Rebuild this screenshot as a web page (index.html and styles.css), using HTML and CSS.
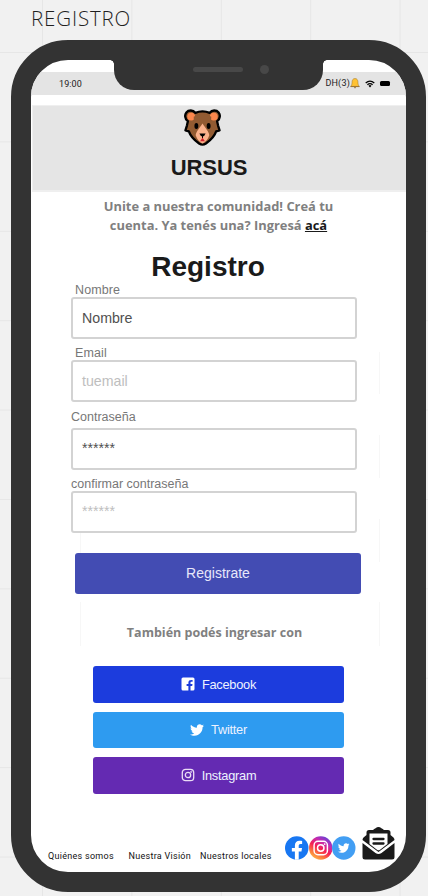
FILE: index.html
```html
<!DOCTYPE html>
<html lang="es">
<head>
<meta charset="utf-8">
<title>Ursus - Registro</title>
<link rel="stylesheet" href="styles.css">
</head>
<body>
<svg width="0" height="0" class="defs">
  <defs>
    <symbol id="bird" viewBox="0 0 512 512"><path fill="currentColor" d="M459 152c.3 4.500.3 9.100.3 13.600 0 138.700-105.600 298.600-298.600 298.600C101.100 464.200 46.100 447 0 417.100c8.400 1 16.600 1.300 25.300 1.300 49.100 0 94.200-16.600 130.300-44.800-46.100-1-84.800-31.200-98.100-72.800 6.500 1 13 1.600 19.800 1.600 9.400 0 18.800-1.300 27.600-3.600-48.100-9.700-84.100-52-84.100-103v-1.300c14 7.800 30.200 12.700 47.400 13.300-28.300-18.800-46.800-51-46.800-87.400 0-19.500 5.200-37.400 14.300-53 51.700 63.700 129.300 105.300 216.400 109.800-1.600-7.800-2.600-15.900-2.600-24 0-57.800 46.800-104.900 104.900-104.900 30.200 0 57.500 12.700 76.700 33.100 23.700-4.500 46.500-13.300 66.600-25.300-7.800 24.400-24.400 44.800-46.100 57.800 21.100-2.300 41.600-8.100 60.400-16.200-14.300 20.800-32.200 39.300-52.600 54.300z"/></symbol>
    <linearGradient id="insta" x1="0.200" y1="1" x2="0.800" y2="0">
      <stop offset="0" stop-color="#ffc24a"/><stop offset=".25" stop-color="#fb743c"/><stop offset=".48" stop-color="#f51f55"/><stop offset=".72" stop-color="#c62bb0"/><stop offset="1" stop-color="#5145dc"/>
    </linearGradient>
  </defs>
</svg>
<h2 class="board-title">REGISTRO</h2>
<main class="phone">
  <div class="notch"><span class="speaker"></span><span class="camera"></span></div>
  <div class="status">
    <span class="time">19:00</span>
    <span class="network">DH(3)</span>
    <svg class="bell" viewBox="0 0 10 11"><path d="M5 .5C2.800.6 2 2.200 2 4.500 2 6.800 1.500 7.500.6 8.400h8.800C8.500 7.500 8 6.800 8 4.500 8 2.200 7.200.6 5 .5z" fill="#ffc233" stroke="#9b742b" stroke-width=".5"/><path d="M.6 8.600h8.800M4 9.300q1 1.500 2 0" fill="none" stroke="#8e6524" stroke-width=".8"/></svg>
    <svg class="wifi" viewBox="0 0 10 8"><path d="M.7 3Q5-.8 9.300 3M2.400 4.700Q5 2.500 7.600 4.700" fill="none" stroke="#000" stroke-width="1.300"/><path d="M3.500 5.700Q5 4.400 6.500 5.700L5 7.500z"/></svg>
    <span class="battery"></span>
  </div>
  <header class="brand">
    <svg class="bear" viewBox="0 0 38 38">
      <path d="M7 1.500C3 1.500.8 4.600 1.300 8c.2 2 1.200 3.500 2.700 4.500L3 17l-1.500 5 3.500 1c1.500 4.500 5 8.500 10.500 12.500q3.500 2.200 7 0C28 31.500 31.500 27.500 33 23l3.500-1L35 17l-1-4.500c1.500-1 2.500-2.500 2.700-4.500.5-3.400-1.700-6.500-5.700-6.500-2 0-3.600 1-4.600 2.500Q19 1 11.600 4C10.600 2.500 9 1.500 7 1.500z" fill="#925b32" stroke="#000" stroke-width="2.400" stroke-linejoin="round"/>
      <circle cx="7.400" cy="7.800" r="4" fill="#fb874d"/><circle cx="30.600" cy="7.800" r="4" fill="#fb874d"/>
      <path d="M10 8Q19 2 28 8L27 22 19 31 10 22z" fill="#925b32"/>
      <path d="M19 15C16 20 12.500 23 12 27c1.500 4.500 4 7 7 8.500 3-1.500 5.500-4 7-8.500-.5-4-4-7-7-12z" fill="#fab28c"/>
      <ellipse cx="12.700" cy="17.500" rx="2" ry="3" /><ellipse cx="25.300" cy="17.500" rx="2" ry="3"/>
      <path d="M15.800 25.200h6.400q-1 2.800-3.200 3-2.200-.2-3.200-3z"/><path d="M19 27v3" stroke="#000"/>
      <path d="M19 29.500L16.500 33h5z" fill="#d3222d"/>
    </svg>
    <div class="brand-name">URSUS</div>
  </header>
  <p class="intro">Unite a nuestra comunidad! Creá tu<br>cuenta. Ya tenés una? Ingresá <a>acá</a></p>
  <h1>Registro</h1>
  <form class="form">
    <label class="inset">Nombre</label>
    <div class="field filled">Nombre</div>
    <label class="inset email">Email</label>
    <div class="field">tuemail</div>
    <label class="password">Contraseña</label>
    <div class="field secret filled">******</div>
    <label class="confirm">confirmar contraseña</label>
    <div class="field secret">******</div>
    <div class="submit">Registrate</div>
  </form>
  <p class="also">También podés ingresar con</p>
  <div class="socials">
    <div class="social facebook"><svg viewBox="0 0 14 14"><path fill-rule="evenodd" fill="#fff" d="M2 .5h10Q13.500.5 13.500 2v10q0 1.500-1.500 1.500H9.500V9h1.700l.3-2h-2V5.800c0-.6.300-1 1.100-1h1V3.100C9 2.700 7.400 3.400 7.400 5.600V7H5.600v2h1.800v4.500H2Q.5 13.500.5 12V2Q.5.5 2 .5z"/></svg><span>Facebook</span></div>
    <div class="social twitter"><svg viewBox="0 0 512 512"><use href="#bird"/></svg><span>Twitter</span></div>
    <div class="social instagram"><svg viewBox="0 0 14 14" fill="none" stroke="#eadcf5" stroke-width="1.300"><rect x="1.300" y="1.300" width="11.400" height="11.400" rx="3.200"/><circle cx="7" cy="7" r="2.700"/><circle cx="10.300" cy="3.700" r=".3"/></svg><span>Instagram</span></div>
  </div>
  <footer class="footer">
    <nav><a class="who">Quiénes somos</a><a class="vision">Nuestra Visión</a><a>Nuestros locales</a></nav>
    <div class="links">
      <svg viewBox="0 0 24 24"><circle cx="12" cy="12" r="12" fill="#1877f2"/><path fill="#fff" d="M10.100 24v-8.500H7V12h3.100V9.400c0-3.100 1.900-4.800 4.700-4.800 1.300 0 2.700.2 2.700.2v3H16c-1.500 0-2 .9-2 1.900V12h3.400l-.6 3.500H14V24z"/></svg>
      <svg viewBox="0 0 24 24"><circle cx="12" cy="12" r="12" fill="url(#insta)"/><g fill="none" stroke="#fff" stroke-width="1.500"><rect x="5.200" y="5.200" width="13.600" height="13.600" rx="4"/><circle cx="12" cy="12" r="3.300"/></g><circle cx="16" cy="8" r=".9" fill="#fff"/></svg>
      <svg viewBox="0 0 24 24"><circle cx="12" cy="12" r="12" fill="#429ef3"/><svg x="6" y="6" width="12" height="12" color="#fff"><use href="#bird" width="12" height="12"/></svg></svg>
    </div>
    <svg class="mail" viewBox="0 0 32 33"><path fill="#1a1a1a" d="M16 0c-2 0-4 2-5.500 3H6.500Q4 3 4 5.500V8L1 10.500Q0 11.500 0 13l16 12 16-12q0-1.500-1-2.500L28 8V5.500Q28 3 25.500 3h-4C20 2 18 0 16 0zM0 16v14q0 2.500 2.500 2.500h27Q32 32.500 32 30V16L19 26q-3 2-6 0z"/><path fill="#fff" d="M7 6.500h18V17l-7.500 5.700q-1.500 1-3 0L7 17z"/><path d="M11 12h10M11 16.500h10" stroke="#1a1a1a" stroke-width="2.300" stroke-linecap="round"/></svg>
  </footer>
</main>
</body>
</html>
```
FILE: styles.css
```css
* { box-sizing: border-box; }
body {
  margin: 0;
  height: 896px;
  overflow: hidden;
  font-family: "Liberation Sans", sans-serif;
  background-color: #f1f1f1;
  background-image: linear-gradient(90deg, #e6e6e6 1px, transparent 1px), linear-gradient(#e6e6e6 1px, transparent 1px);
  background-size: 89.4px 89.4px;
  background-position: 42px 52px;
}
.defs { display: block; }
.board-title {
  margin: 0;
  height: 40px;
  padding: 5px 0 0 31px;
  font: 300 20.500px/27px "Open Sans", sans-serif;
  letter-spacing: .85px;
  color: #1f1f1f;
}
.phone {
  position: relative;
  display: flex;
  flex-direction: column;
  width: 415px;
  height: 852px;
  margin-left: 11px;
  border: 20px solid #333;
  border-radius: 57px;
  padding-top: 12px;
  overflow: hidden;
  /* faint column guides on both sides of the form */
  background:
    linear-gradient(#f7f7f7, #f7f7f7) 348px 292px / 1px 42px no-repeat,
    linear-gradient(#f7f7f7, #f7f7f7) 348px 375px / 1px 43px no-repeat,
    linear-gradient(#f7f7f7, #f7f7f7) 348px 459px / 1px 43px no-repeat,
    linear-gradient(#f7f7f7, #f7f7f7) 348px 542px / 1px 44px no-repeat,
    linear-gradient(#f7f7f7, #f7f7f7) 49px 473px / 1px 29px no-repeat,
    linear-gradient(#f7f7f7, #f7f7f7) 49px 542px / 1px 44px no-repeat,
    #fff;
}
.notch {
  position: absolute;
  top: -1px;
  left: 83px;
  display: flex;
  align-items: center;
  gap: 17px;
  width: 209px;
  height: 31px;
  padding: 0 0 11px 79px;
  border-radius: 0 0 20px 20px;
  background: #333;
}
.notch::before, .notch::after {
  content: "";
  position: absolute;
  top: 1px;
  width: 4px;
  height: 4px;
}
.notch::before { left: -4px; background: radial-gradient(circle at 0 100%, transparent 3.500px, #333 4px); }
.notch::after { right: -4px; background: radial-gradient(circle at 100% 100%, transparent 3.500px, #333 4px); }
.speaker { width: 50px; height: 5px; border-radius: 3px; background: #484848; }
.camera { width: 9px; height: 9px; border-radius: 50%; background: #484848; }
.status {
  display: flex;
  align-items: center;
  flex: none;
  height: 23px;
  padding: 0 16px 0 28px;
  background: #e4e4e4;
  color: #222;
  font: 9px/12px Roboto, sans-serif;
}
.time { letter-spacing: .1px; }
.network { margin-left: auto; margin-top: -2px; letter-spacing: .2px; }
.bell { width: 10px; height: 11px; margin-right: 5px; }
.wifi { width: 10px; height: 8px; margin-right: 5px; }
.battery { width: 10px; height: 5px; border-radius: 1.500px; background: #000; }
.brand {
  flex: none;
  display: flex;
  flex-direction: column;
  align-items: center;
  height: 87px;
  margin: 10px 0 0 1px;
  padding: 3px 34px 0 0;
  border: solid #efefef;
  border-width: 1px 0 2px 1px;
  background: #e5e5e5;
}
.bear { flex: none; width: 37px; height: 37px; }
.brand-name { margin: 9px 0 0 13px; font-weight: 700; font-size: 22px; line-height: 26px; letter-spacing: -.1px; color: #1a1a1a; }
.intro, .also { margin: 0; font: 700 13px/19px "Open Sans", sans-serif; color: #808080; text-align: center; }
.intro { margin: 5px 0 0; font-size: 12.900px; }
.intro a { color: #1a1a1a; text-decoration: underline; }
h1 { margin: 16px 0 0; padding-right: 21px; text-align: center; font-size: 28px; line-height: 32px; color: #1a1a1a; }
.form { width: 290px; margin-left: 40px; }
label { display: block; height: 14px; font-size: 12.500px; line-height: 15px; color: #777; }
.inset { padding-left: 4px; letter-spacing: .1px; }
.field {
  height: 42px;
  width: 286px;
  border: 2px solid #d3d3d3;
  border-radius: 3px;
  padding-left: 9px;
  font-size: 14.200px;
  line-height: 38px;
  color: #bebebe;
}
.filled { color: #505050; }
.email { margin-top: 7px; }
.password { margin-top: 8px; height: 18px; }
.confirm { margin-top: 7px; }
.secret { line-height: 37px; }
.submit { margin: 20px 0 0 4px; height: 41px; border-radius: 3px; background: #434cb3; color: #e7e7fa; font-size: 14px; line-height: 41px; text-align: center; }
.also { margin: 29px 8px 0 0; font-size: 12.500px; }
.socials { display: grid; gap: 9px; width: 251px; margin: 24px 0 0 62px; }
.social { display: flex; align-items: center; justify-content: center; gap: 7px; height: 36.600px; border-radius: 3px; color: #edf2ff; font-size: 12.800px; letter-spacing: -.25px; }
.social svg { width: 14px; height: 14px; color: #fff; }
.facebook { background: #1c3cdd; }
.twitter { background: #2e9bf0; }
.instagram { background: #642ab2; }
.footer { display: flex; align-items: flex-end; margin-top: auto; padding: 0 11.500px 12px 17px; }
nav { display: flex; flex: 1; font: 9px/10px Roboto, sans-serif; color: #111; letter-spacing: .28px; white-space: nowrap; padding-bottom: 0; margin-bottom: -1px; }
.who { width: 80.500px; }
.vision { width: 71.500px; }
.links { display: flex; flex: none; margin-right: 6px; }
.links > svg { width: 23.500px; height: 24px; }
.mail { flex: none; width: 33px; height: 33px; }
```
